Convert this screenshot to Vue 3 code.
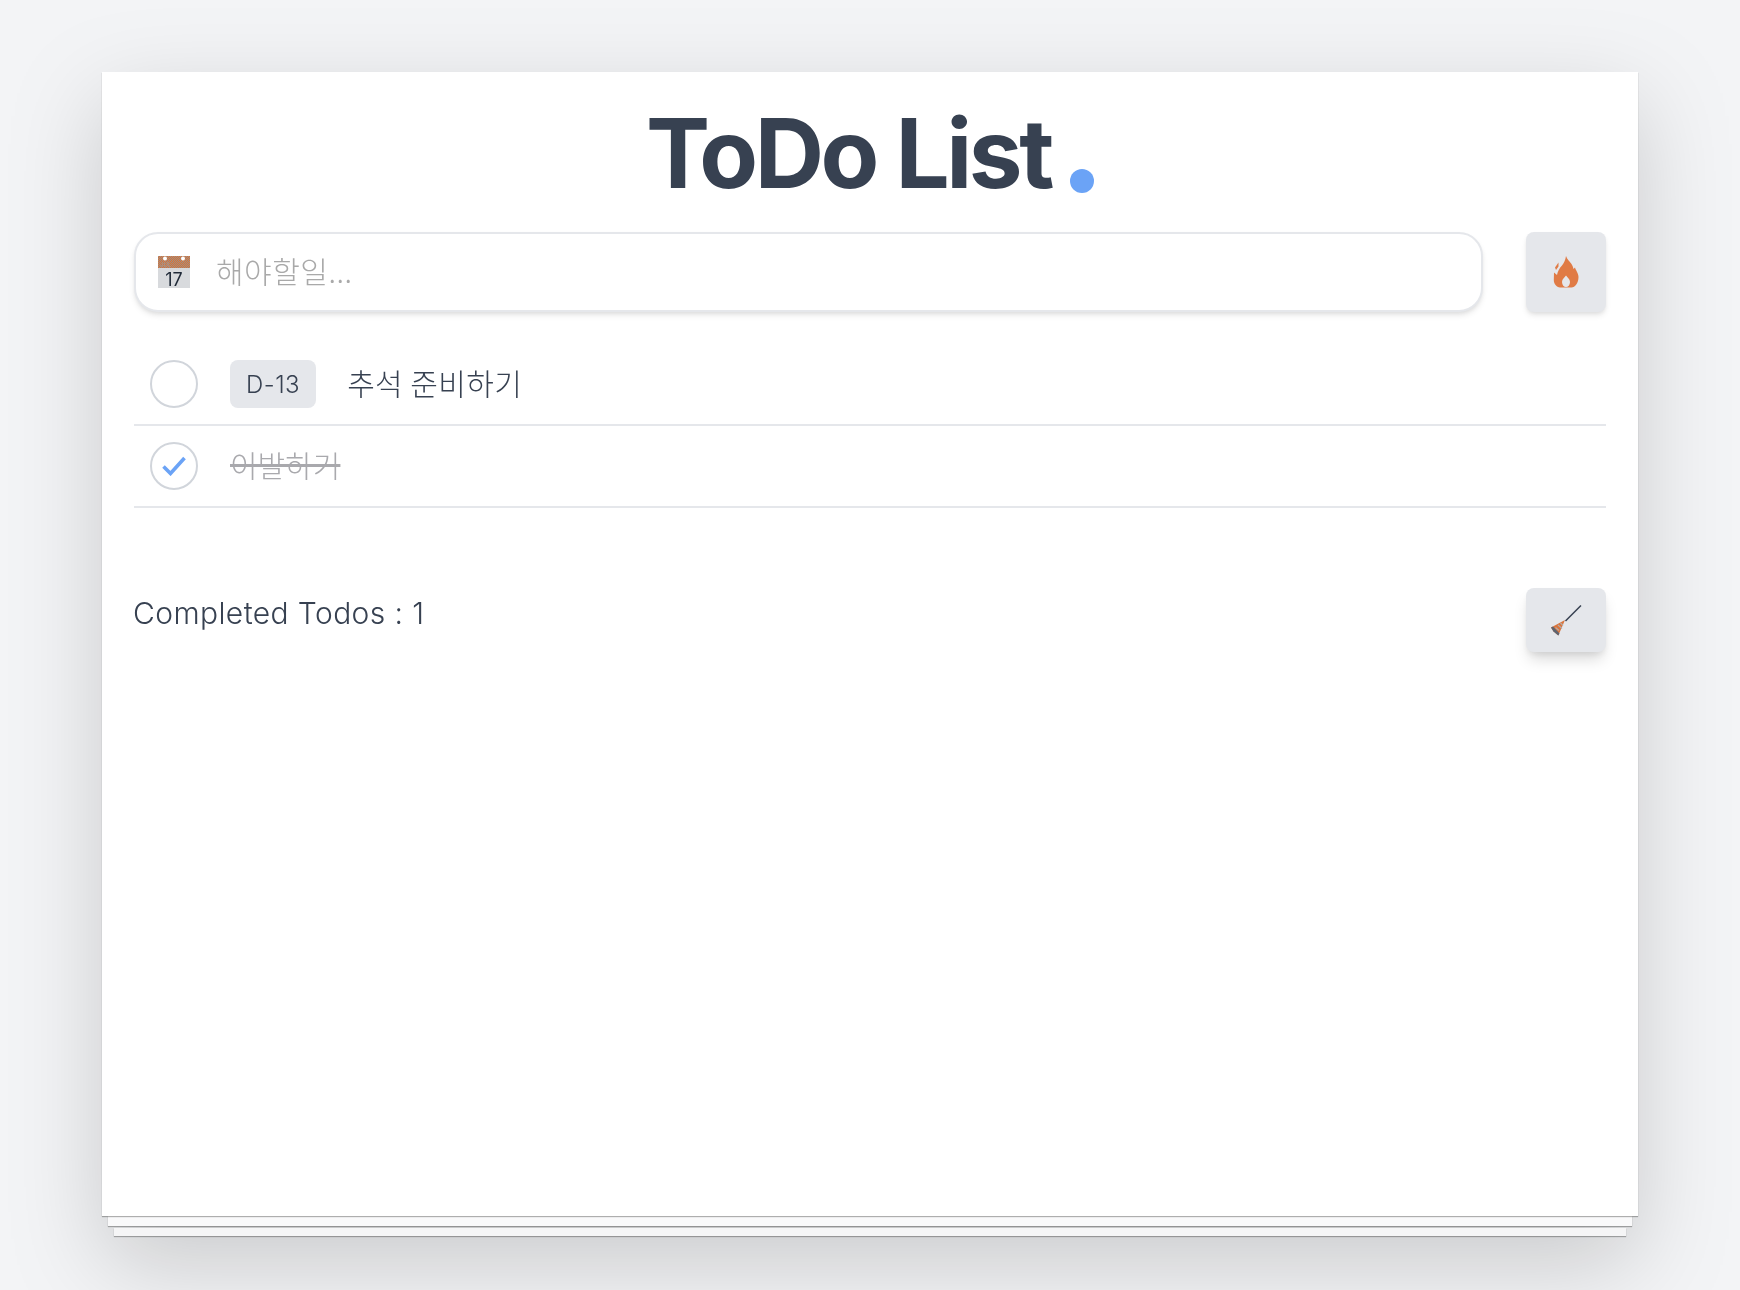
<script setup>
import { ref } from 'vue'

const newTodo = ref('')
const todos = ref([
  { id: 1, title: '추석 준비하기', dday: 'D-13', done: false },
  { id: 2, title: '이발하기', dday: '', done: true }
])
</script>

<template>
  <div class="page">
    <div class="stack">
      <main class="card">
        <h1 class="title">ToDo List<span class="dot"></span></h1>

        <div class="add-row">
          <div class="input-box">
            <svg class="calendar" viewBox="0 0 32 32" width="32" height="32">
              <defs>
                <pattern id="dither" width="2" height="2" patternUnits="userSpaceOnUse">
                  <rect width="2" height="2" fill="#e0702f" />
                  <rect width="1" height="1" fill="#96918c" />
                  <rect x="1" y="1" width="1" height="1" fill="#96918c" />
                </pattern>
              </defs>
              <rect x="0" y="0" width="32" height="32" fill="#d8dadd" />
              <rect x="0" y="0" width="32" height="12" fill="url(#dither)" />
              <text x="2" y="11" class="cal-month">JUL</text>
              <circle cx="7" cy="2.500" r="2" fill="#fff" />
              <circle cx="25" cy="2.500" r="2" fill="#fff" />
              <text x="16" y="29.500" text-anchor="middle" class="cal-day">17</text>
            </svg>
            <input v-model="newTodo" class="todo-input" placeholder="해야할일..." />
          </div>
          <button class="square-btn add-btn" aria-label="add">
            <svg viewBox="0 0 26 32" width="26" height="32">
              <path
                fill="#e07b45"
                fill-rule="evenodd"
                d="M13 0C14 3 16.500 5.500 18.500 8 19.500 9.500 20 11 20.500 13L22 11.500C22.500 14 25.500 17 25.500 21 25.500 27 22 31.500 18.500 31.500L7 31.500C3.500 31 .8 28 .8 24L1 16.500 4 19C4.500 15.500 6.500 12 9 9.500 11 7 12.500 4 13 0ZM13 19.500C11.500 21.500 9 23 9 26 9 29 11 31 13 31 15 31 17 29 17 26 17 23 14.500 21.500 13 19.500Z"
              />
              <path fill="#e07b45" d="M2 11.500 5.500 6.500 5.500 10.500 3 14Z" />
            </svg>
          </button>
        </div>

        <ul class="todo-list">
          <li v-for="todo in todos" :key="todo.id" class="todo-row">
            <span class="check">
              <svg v-if="todo.done" viewBox="0 0 24 20" width="24" height="20">
                <path d="M1.500 10.500 8.500 17.500 22.500 2" fill="none" stroke="#6ba3f6" stroke-width="3.600" />
              </svg>
            </span>
            <span v-if="todo.dday" class="dday">{{ todo.dday }}</span>
            <span class="todo-title" :class="{ done: todo.done }">{{ todo.title }}</span>
          </li>
        </ul>

        <div class="footer-row">
          <span class="completed">Completed Todos : 1</span>
          <button class="square-btn clear-btn" aria-label="clear">
            <svg viewBox="0 0 32 31" width="32" height="31">
              <path d="M15.500 16 31 .5" stroke="#374151" stroke-width="1.500" fill="none" />
              <path d="M15 15 1 22.500 3.500 26.500 8.300 30.500Z" fill="#d9743c" />
              <path d="M1 22.500 3.500 26.500 8.300 30.500 9.500 28.500 3 21.500Z" fill="#5d6470" />
              <path d="M5.500 22.500 9 25.500M8 20 12 23.500M10.500 18 13 20.500" stroke="#b7aca6" stroke-width="1.200" fill="none" />
            </svg>
          </button>
        </div>
      </main>
      <div class="sheet sheet-one"></div>
      <div class="sheet sheet-two"></div>
    </div>
  </div>
</template>

<style>
html,
body {
  background: #f3f4f6;
}
</style>

<style scoped>
.page {
  height: 1290px;
  box-sizing: border-box;
  padding-top: 72px;
  overflow: hidden;
  font-family: Inter, "Noto Sans CJK KR", sans-serif;
  color: #374151;
}

.stack {
  width: 1536px;
  margin: 0 auto;
  filter: drop-shadow(0 30px 45px rgba(0, 0, 0, 0.17));
}

.card {
  height: 1144px;
  box-sizing: border-box;
  padding: 32px;
  background: #fff;
  box-shadow: 0 1px 1px rgba(0, 0, 0, 0.3);
  position: relative;
}

.sheet {
  background: #f9f9fa;
  box-shadow: 0 1px 1px rgba(0, 0, 0, 0.3);
}

.sheet-one {
  height: 10px;
  margin: 0 6px;
}

.sheet-two {
  height: 8px;
  margin: 2px 12px 0;
  background: #f5f5f6;
}

.title {
  margin: 0 0 32px;
  height: 96px;
  font-size: 96px;
  line-height: 98px;
  font-weight: 700;
  letter-spacing: -3.400px;
  text-align: center;
}

.dot {
  display: inline-block;
  width: 24px;
  height: 24px;
  margin-left: 19px;
  border-radius: 50%;
  background: #6ba3f6;
  vertical-align: -5px;
}

.add-row {
  display: flex;
  gap: 43px;
  height: 80px;
}

.input-box {
  flex: 1;
  display: flex;
  align-items: center;
  gap: 26px;
  padding: 0 22px;
  border: 2px solid #e5e7eb;
  border-radius: 24px;
  background: #fff;
  box-shadow: 0 4px 6px -1px rgba(0, 0, 0, 0.1), 0 2px 4px -1px rgba(0, 0, 0, 0.06);
}

.calendar {
  flex: none;
}

.cal-day {
  font-family: Inter, sans-serif;
  font-size: 18px;
  fill: #1f2937;
}

.cal-month {
  font-family: Inter, sans-serif;
  font-size: 6px;
  fill: #a99a90;
}

.todo-input {
  flex: 1;
  min-width: 0;
  height: 44px;
  margin-bottom: 4px;
  border: none;
  outline: none;
  padding: 0;
  background: transparent;
  font: 300 30px "Noto Sans CJK KR", sans-serif;
  letter-spacing: 0.500px;
  color: #374151;
}

.todo-input::placeholder {
  color: #a9a9a9;
  opacity: 1;
}

.square-btn {
  flex: none;
  width: 80px;
  display: flex;
  align-items: center;
  justify-content: center;
  border: none;
  padding: 0;
  border-radius: 8px;
  background: #e5e7eb;
}

.add-btn {
  height: 80px;
  box-shadow: 0 4px 6px -1px rgba(0, 0, 0, 0.1), 0 2px 4px -1px rgba(0, 0, 0, 0.06);
}

.clear-btn {
  height: 64px;
  box-shadow: 0 10px 15px -3px rgba(0, 0, 0, 0.15), 0 4px 6px -2px rgba(0, 0, 0, 0.08);
}

.todo-list {
  list-style: none;
  margin: 32px 0 0;
  padding: 0;
}

.todo-row {
  display: flex;
  align-items: center;
  gap: 32px;
  padding: 16px;
  border-bottom: 2px solid #e5e7eb;
}

.check {
  flex: none;
  width: 48px;
  height: 48px;
  box-sizing: border-box;
  display: flex;
  align-items: center;
  justify-content: center;
  border: 2px solid #d1d5db;
  border-radius: 50%;
}

.dday {
  height: 48px;
  padding: 0 16px;
  margin-right: -1px;
  border-radius: 8px;
  background: #e5e7eb;
  font-size: 24px;
  font-weight: 300;
  line-height: 50px;
  letter-spacing: 0.500px;
}

.todo-title {
  font: 300 30px/44px "Noto Sans CJK KR", sans-serif;
  height: 48px;
  letter-spacing: 0.400px;
}

.todo-title.done {
  color: #a9a9ad;
  letter-spacing: 0;
  text-decoration: line-through;
  text-decoration-thickness: 3px;
}

.footer-row {
  display: flex;
  justify-content: space-between;
  align-items: flex-start;
  margin-top: 80px;
}

.completed {
  margin-left: -1px;
  margin-top: 7px;
  font-size: 30px;
  font-weight: 300;
  line-height: 36px;
  letter-spacing: 0.400px;
}
</style>
